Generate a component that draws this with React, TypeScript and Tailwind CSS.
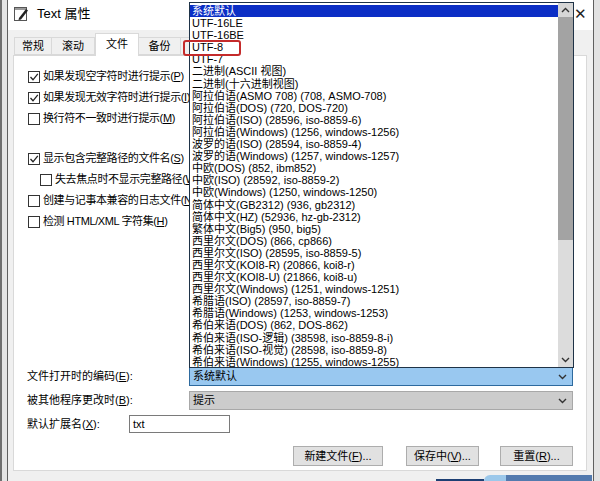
import React from 'react';

const encodings: string[] = [
  '系统默认',
  'UTF-16LE',
  'UTF-16BE',
  'UTF-8',
  'UTF-7',
  '二进制(ASCII 视图)',
  '二进制(十六进制视图)',
  '阿拉伯语(ASMO 708) (708, ASMO-708)',
  '阿拉伯语(DOS) (720, DOS-720)',
  '阿拉伯语(ISO) (28596, iso-8859-6)',
  '阿拉伯语(Windows) (1256, windows-1256)',
  '波罗的语(ISO) (28594, iso-8859-4)',
  '波罗的语(Windows) (1257, windows-1257)',
  '中欧(DOS) (852, ibm852)',
  '中欧(ISO) (28592, iso-8859-2)',
  '中欧(Windows) (1250, windows-1250)',
  '简体中文(GB2312) (936, gb2312)',
  '简体中文(HZ) (52936, hz-gb-2312)',
  '繁体中文(Big5) (950, big5)',
  '西里尔文(DOS) (866, cp866)',
  '西里尔文(ISO) (28595, iso-8859-5)',
  '西里尔文(KOI8-R) (20866, koi8-r)',
  '西里尔文(KOI8-U) (21866, koi8-u)',
  '西里尔文(Windows) (1251, windows-1251)',
  '希腊语(ISO) (28597, iso-8859-7)',
  '希腊语(Windows) (1253, windows-1253)',
  '希伯来语(DOS) (862, DOS-862)',
  '希伯来语(ISO-逻辑) (38598, iso-8859-8-i)',
  '希伯来语(ISO-视觉) (28598, iso-8859-8)',
  '希伯来语(Windows) (1255, windows-1255)',
];

const Chevron: React.FC<{ up?: boolean; className?: string }> = ({ up, className }) => (
  <svg width="9" height="6" viewBox="0 0 9 6" className={className}>
    <polyline
      points={up ? '1,5 4.5,1.5 8,5' : '1,1 4.5,4.5 8,1'}
      fill="none"
      stroke="#333"
      strokeWidth="1.4"
    />
  </svg>
);

const CheckBox: React.FC<{ checked?: boolean }> = ({ checked }) => (
  <div className="w-[12px] h-[12px] border border-[#333] bg-white flex items-center justify-center shrink-0">
    {checked && (
      <svg width="10" height="10" viewBox="0 0 10 10">
        <polyline points="1.5,5 4,7.8 8.8,1.8" fill="none" stroke="#222" strokeWidth="1.3" />
      </svg>
    )}
  </div>
);

const CheckRow: React.FC<{ checked?: boolean; indent?: boolean; children: React.ReactNode }> = ({
  checked,
  indent,
  children,
}) => (
  <div className={`h-[21px] flex items-center gap-[3px] whitespace-nowrap ${indent ? 'pl-[12px]' : ''}`}>
    <CheckBox checked={checked} />
    <span className="tracking-[-0.4px]">{children}</span>
  </div>
);

const Tab: React.FC<{ label: string; width: string; active?: boolean }> = ({ label, width, active }) => (
  <div
    className={`${width} flex items-center justify-center border border-[#d9d9d9] ${
      active
        ? 'h-[23px] bg-white border-b-0 -mb-px z-10 pb-[2px]'
        : 'h-[18px] bg-[#f0f0f0] -ml-px'
    }`}
  >
    {label}
  </div>
);

const Button: React.FC<{ width: string; className?: string; children: React.ReactNode }> = ({
  width,
  className,
  children,
}) => (
  <div
    className={`${width} h-[20px] bg-[#e1e1e1] border border-[#adadad] flex items-center justify-center ${className ?? ''}`}
  >
    {children}
  </div>
);

export default function App() {
  return (
    <div className="relative w-[600px] h-[481px] flex overflow-hidden bg-[#dcdcdc] text-[11px] text-black font-[family-name:'Liberation_Sans','Noto_Sans_CJK_SC',sans-serif]">
      <div className="w-[2px] bg-[#6f6f6f]" />
      <div className="w-[5px] bg-[#e4e4e4]" />

      {/* Dialog */}
      <div className="w-[587px] flex flex-col bg-[#f0f0f0] border-x border-[#5f5f5f]">
        {/* Title bar */}
        <div className="h-[30px] bg-white flex items-center pl-[5px] pb-[2px] shrink-0">
          <svg width="16" height="16" viewBox="0 0 16 16">
            <rect x="1.5" y="1.5" width="12" height="13" fill="#fff" stroke="#555" />
            <rect x="2" y="2" width="11" height="2" fill="#9a9a9a" />
            <polygon points="6,12 13,3 15,4.5 8,13.5 5.5,14" fill="#222" />
          </svg>
          <span className="ml-[8px] text-[13px]">Text 属性</span>
          <span className="ml-auto mr-[6px] text-[15px] text-[#222]">✕</span>
        </div>

        {/* Tabs */}
        <div className="h-[22px] mt-[3px] pl-[7px] flex items-end shrink-0">
          <Tab label="常规" width="w-[38px]" />
          <Tab label="滚动" width="w-[44px]" />
          <Tab label="文件" width="w-[44px]" active />
          <Tab label="备份" width="w-[43px]" />
          <Tab label="编辑" width="w-[40px]" />
        </div>

        {/* Panel */}
        <div className="ml-[5px] mr-[6px] h-[416px] bg-white border border-[#d9d9d9] flex flex-col pl-[14px] pt-[10px]">
          {/* labels run under the open list, so they are cut where it starts */}
          <div className="w-[161px] overflow-hidden">
            <CheckRow checked>
              如果发现空字符时进行提示(<u>P</u>)
            </CheckRow>
            <CheckRow checked>
              如果发现无效字符时进行提示(<u>I</u>)
            </CheckRow>
            <CheckRow>
              换行符不一致时进行提示(<u>M</u>)
            </CheckRow>
            <div className="mt-[19px]">
              <CheckRow checked>
                显示包含完整路径的文件名(<u>S</u>)
              </CheckRow>
              <CheckRow indent>
                失去焦点时不显示完整路径(<u>W</u>)
              </CheckRow>
              <CheckRow>
                创建与记事本兼容的日志文件(<u>N</u>)
              </CheckRow>
              <CheckRow>
                检测 HTML/XML 字符集(<u>H</u>)
              </CheckRow>
            </div>
          </div>

          {/* Form rows */}
          <div className="mt-[135px] flex flex-col">
            <div className="h-[19px] flex items-center">
              <span className="w-[162px] -ml-px">
                文件打开时的编码(<u>E</u>):
              </span>
              <div className="w-[384px] h-[19px] bg-[#99c8f0] border border-[#2e6a9e] flex items-center pl-[3px] pr-[5px]">
                <span>系统默认</span>
                <Chevron className="ml-auto" />
              </div>
            </div>
            <div className="h-[19px] mt-[5px] flex items-center">
              <span className="w-[162px] -ml-px">
                被其他程序更改时(<u>B</u>):
              </span>
              <div className="w-[384px] h-[19px] bg-[#cccccc] border border-[#a8a8a8] flex items-center pl-[3px] pr-[5px]">
                <span>提示</span>
                <Chevron className="ml-auto" />
              </div>
            </div>
            <div className="h-[18px] mt-[5px] flex items-center">
              <span className="w-[102px] -ml-px">
                默认扩展名(<u>X</u>):
              </span>
              <div className="w-[101px] h-[18px] border border-[#7a7a7a] bg-white flex items-center pl-[3px]">
                txt
              </div>
            </div>
          </div>

          {/* Buttons */}
          <div className="mt-[13px] flex pr-[13px] justify-end">
            <Button width="w-[90px]">
              新建文件(<u>F</u>)...
            </Button>
            <Button width="w-[73px]" className="ml-[23px]">
              保存中(<u>V</u>)...
            </Button>
            <Button width="w-[73px]" className="ml-[21px]">
              重置(<u>R</u>)...
            </Button>
          </div>
        </div>
      </div>
      <div className="flex-1 bg-[#e2e2e2]" />

      {/* Opened encoding drop-down list */}
      <div className="absolute left-[189px] top-[2px] w-[385px] h-[366px] bg-white border border-[#1f3347] flex z-20">
        <div className="flex-1 pt-[2px] overflow-hidden">
          {encodings.map((name, i) => (
            <div
              key={name}
              className={`h-[12.1px] leading-[12.1px] pl-[2px] whitespace-nowrap ${
                i === 0 ? 'bg-[#0b2ec5] text-white' : ''
              }`}
            >
              {name}
            </div>
          ))}
        </div>
        <div className="w-[15px] flex flex-col bg-[#dcdcdc]">
          <div className="h-[14px] bg-[#d6d6d6] flex items-center justify-center">
            <Chevron up />
          </div>
          <div className="h-[223px] bg-[#a3a3a3]" />
          <div className="flex-1" />
          <div className="h-[14px] flex items-center justify-center">
            <Chevron />
          </div>
        </div>
      </div>

      {/* Red highlight around UTF-8 */}
      <div className="absolute left-[183px] top-[40px] w-[58px] h-[16px] border-2 border-[#c42a2a] rounded-[3px] z-30" />

      {/* Watermark fragment */}
      <div className="absolute left-[436px] bottom-0 w-[156px] h-[6px] flex z-30">
        <div className="w-[48px] h-[2px] mt-auto bg-[#1d3f73]" />
        <div className="w-[22px] h-[6px] bg-[#9cc8ea] rounded-tl-[10px]" />
        <div className="flex-1 h-[6px] bg-[#2c5d9e] opacity-80" />
      </div>
    </div>
  );
}
